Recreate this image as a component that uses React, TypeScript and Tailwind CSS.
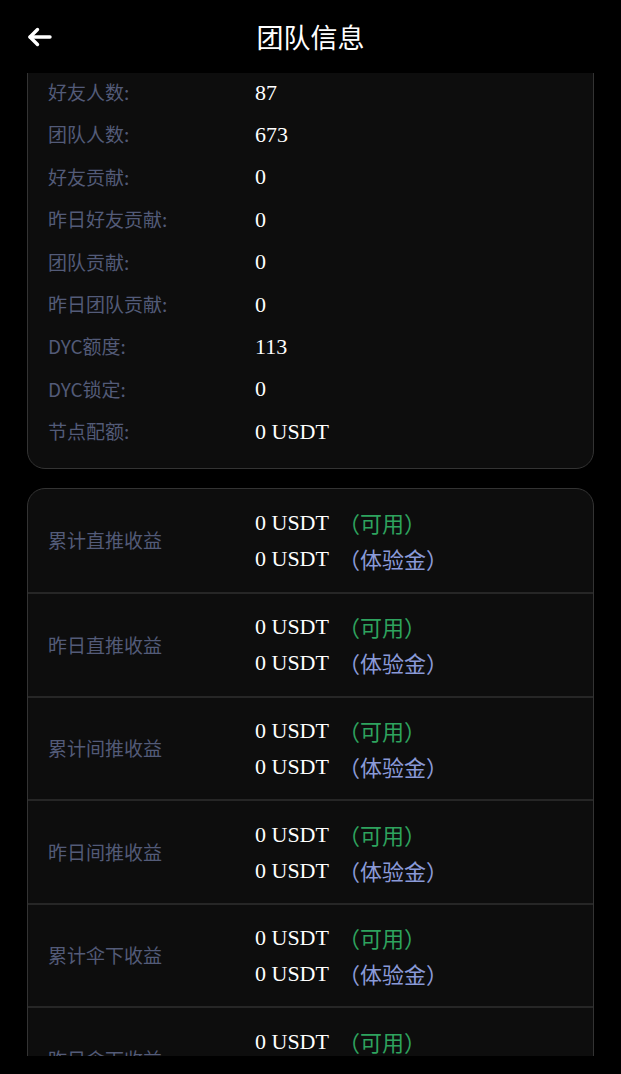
import React from "react";

const cjk = { fontFamily: '"Noto Sans CJK SC", "Noto Sans", sans-serif' };
const serif = { fontFamily: '"Liberation Serif", "Noto Sans CJK SC", serif' };

const info: [string, string][] = [
  ["好友人数:", "87"],
  ["团队人数:", "673"],
  ["好友贡献:", "0"],
  ["昨日好友贡献:", "0"],
  ["团队贡献:", "0"],
  ["昨日团队贡献:", "0"],
  ["DYC额度:", "113"],
  ["DYC锁定:", "0"],
  ["节点配额:", "0 USDT"],
];

const earnings = [
  "累计直推收益",
  "昨日直推收益",
  "累计间推收益",
  "昨日间推收益",
  "累计伞下收益",
  "昨日伞下收益",
];

export default function App() {
  return (
    <div className="w-[621px] h-[1074px] bg-black flex flex-col overflow-hidden" style={cjk}>
      <header className="h-[73px] shrink-0 flex items-center relative">
        <div className="absolute left-[26px] top-[27px]">
          <svg width="26" height="20" viewBox="0 0 26 20" fill="none">
            <path d="M24 10H4" stroke="white" strokeWidth="3.4" strokeLinecap="round" />
            <path d="M11.5 2.5L4 10l7.5 7.5" stroke="white" strokeWidth="3.4" strokeLinecap="round" strokeLinejoin="round" />
          </svg>
        </div>
        <h1 className="w-full text-center text-white text-[27px] leading-none">团队信息</h1>
      </header>
      <main className="h-[983px] shrink-0 overflow-hidden">
        <div className="-mt-[42px] px-[27px] flex flex-col gap-[19px]">
          <section className="rounded-[18px] border border-[#333333] bg-[#0d0d0d] pt-[39px] pb-[15px]">
            {info.map(([k, v]) => (
              <div key={k} className="h-[42.4px] flex items-center pl-[20px]">
                <span className="w-[207px] text-[19px] text-[#535b78]">{k}</span>
                <span className="text-[22px] text-white" style={serif}>{v}</span>
              </div>
            ))}
          </section>
          <section className="rounded-[18px] border border-[#333333] bg-[#0d0d0d] overflow-hidden">
            {earnings.map((k, i) => (
              <div
                key={k}
                className={
                  "h-[103.6px] flex items-center pl-[20px] " +
                  (i === 0 ? "" : "border-t-2 border-[#262626]")
                }
              >
                <span className="w-[207px] text-[19px] text-[#535b78]">{k}</span>
                <div className="flex flex-col">
                  <div className="h-[36px] flex items-center">
                    <span className="text-[22px] text-white" style={serif}>0 USDT</span>
                    <span className="text-[22px] text-[#2ea35e] ml-[9px]">（可用）</span>
                  </div>
                  <div className="h-[36px] flex items-center">
                    <span className="text-[22px] text-white" style={serif}>0 USDT</span>
                    <span className="text-[22px] text-[#8a9ad8] ml-[9px]">（体验金）</span>
                  </div>
                </div>
              </div>
            ))}
          </section>
        </div>
      </main>
    </div>
  );
}
